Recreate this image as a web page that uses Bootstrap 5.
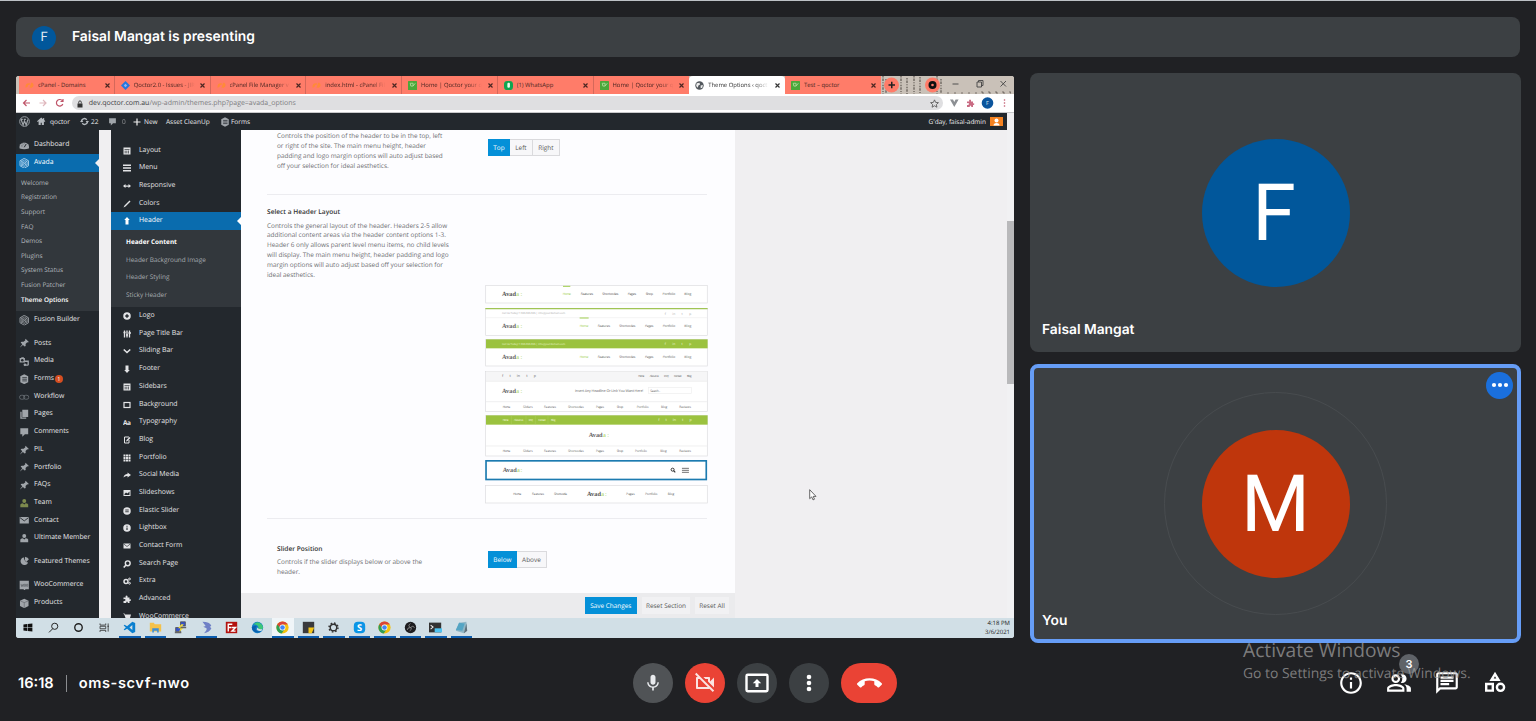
<!DOCTYPE html>
<html lang="en">
<head>
<meta charset="utf-8">
<meta name="viewport" content="width=device-width, initial-scale=1">
<title>Meet - oms-scvf-nwo</title>
<link rel="stylesheet" href="https://cdn.jsdelivr.net/npm/bootstrap@5.3.0/dist/css/bootstrap.min.css">
<style>
html,body{height:721px;overflow:hidden}
body{background:#202124;color:#fff;font-family:Inter,"Open Sans",sans-serif;text-rendering:geometricPrecision;border-top:1px solid #bdc1c6}
svg{display:block;flex:none}
.present-bar{height:40px;margin:16px 16px 0;background:#3c4043;border-radius:8px;padding:1px 0 0 16px;font-size:13.85px;font-weight:600}
.mini-av{width:24px;height:24px;background:#01579b;font:400 13px Roboto,sans-serif;color:#dfe9f2}
.stage{padding:16px 15px 0 16px;height:586px}
/* shared screen */
.share{width:998px;height:562px;margin-top:3px;border-radius:3px;overflow:hidden;background:#f0eff1;color:#444;font-family:"Open Sans","Noto Sans",sans-serif;font-size:6.43px;line-height:10px}
.tabstrip{height:18px;background:#c9c1b8;padding-left:3px}
.tab-i{width:95.75px;background:#ff7c69;color:#4a2622;font-size:5.9px;padding-left:6px;border-right:1px solid #d5685a}
.tab-i:nth-child(7),.tab-i:nth-child(8),.tab-i:nth-child(9){border-right-color:transparent}
.tab-i.on{background:#fff;color:#333;border-radius:4px 4px 0 0}
.tab-i svg{width:9px;height:9px;margin-right:4px}
.tab-i .lbl{width:62px;overflow:hidden;white-space:nowrap}
.tab-i .fade-r{-webkit-mask:linear-gradient(90deg,#000 75%,transparent 98%)}
.tab-i svg.x{width:5px;height:5px;margin:0 0 0 4.5px}
.paper{background:#c9c1b8}
.toolbar{height:19px;background:#fff;border-bottom:1px solid #c9c9cb}
.omni{width:871px;height:14px;border-radius:7px;background:#dfdfe1;margin-left:3.5px;padding:1px 4px 0 4.5px;color:#7c7c7f;font-size:6.97px}
.omni b{font-weight:400;color:#3b3b3e}
.url{padding-left:.8px}
.adminbar{height:17px;width:991px;background:#23282d;color:#eee;display:grid;grid-template-columns:17px 17px 27px 14px 15px 12px 12px 14px 22px 52px 13px 1fr auto 21px;align-items:center;font-size:6.5px}
.adminbar svg{margin:auto}
.wp-main{height:487.5px;overflow:hidden}
.wp-side{width:82.5px;background:#23282d;color:#eee;padding-top:6.5px}
.wp-it{height:17.7px;padding-left:3px;gap:4.5px;white-space:nowrap;color:#e6e7e8;font-weight:500;font-size:6.85px}
.wp-it svg{color:#a0a5aa;width:10.5px;height:10.5px}
.wp-it.on,.rx-it.on{background:#0a6cae;color:#fff;position:relative}
.wp-it.on svg{color:#b8d8ef}
.wp-it.on::after,.rx-it.on::after{content:"";position:absolute;right:0;top:4.5px;border:4.4px solid transparent;border-right-color:#f0eff1;border-left:0}
.rx-it.on::after{border-right-color:#fff}
.sepr{margin-top:5.75px}
.wp-sub{background:#32373c;padding:4px 5px 4.2px;color:#b4b9be}
.wp-sub div{height:14.6px;line-height:14px}
.num{width:8.5px;height:8.5px;background:#d54e21;color:#fff;font-size:5.5px;margin-left:-4px;border-radius:50%}
.gut{width:12px;background:#f0eff1}
.rx{width:130.5px;background:#23282d;color:#e3e4e6;padding-top:11.3px}
.rx-it{height:17.7px;padding:.8px 0 0 12.5px;gap:8px;font-size:6.9px}
.rx-it svg{width:8px;height:8px}
.rx-sub{background:#32373c;color:#a8adb2;padding:3.2px 15.5px 3.2px}
.rx-sub div{height:17.7px;line-height:17.3px;white-space:nowrap}
.pane{width:494px;background:#fdfdff}
.fld{margin:0 28px 0 26px;border-bottom:1px solid #ececf0;white-space:nowrap}
.fld>div{flex:none}
.fld h6{font-size:6.6px;line-height:10px;font-weight:600;margin:0;color:#333}
.desc{color:#6d6d72;line-height:9.95px}
.bgroup{border:1px solid #dadadd;background:#f7f7f9;color:#555;height:17px;line-height:16px;width:max-content}
.bgroup span{padding:0 5.3px;border-left:1px solid #dadadd}
.bgroup .pk{background:#0490d8;color:#fff;border:0;margin:-1px 0 -1px -1px;line-height:17px}
.actbar{height:24.5px;background:#ebebed;padding:1px 6px 0;gap:5px}
.actbar span{height:17px;line-height:18.6px;text-align:center;background:#f1f1f3;color:#555}
.actbar .save{background:#0490d8;color:#fff}
.rail{width:7px;background:#f1f1f3;margin-left:auto;position:relative}
.thumb{height:163px;margin-top:91px;background:#b9b9bb}
.taskbar{height:20.5px;background:#d1dfe6;color:#222}
.tk{width:25.5px;height:20.5px}
.tk:first-child{margin-left:-1px}
.tk svg{width:13px;height:13px}
.tk.run{box-shadow:inset 0 -2px 0 #0b5cad;width:21.5px;margin:0 2px}
.tk.cur{background:#f0f5f8}
/* participant tiles */
.tile{height:279px;background:#3c4043;border-radius:8px;position:relative}
.tile.me{border:4px solid #669df6;margin-top:12px}
.av{width:148px;height:148px;padding-top:3px;font:400 79px Roboto,sans-serif}
.nm{position:absolute;left:12px;bottom:13px;font-size:13.8px;line-height:18px;font-weight:600}
.me .nm{left:8px;bottom:9px}
.ring{width:223px;height:223px;border:1px solid #484c4f}
.more{position:absolute;right:4px;top:3.5px;width:27px;height:27px;background:#1a6fdc}
.pointer{position:absolute;left:792.5px;top:413px}
/* bottom bar */
.dock{height:78px;padding:2px 0 0;position:relative}
.dock .code{width:633px;padding:1.5px 0 0 18px;font-size:14.6px;font-weight:600}
.code .room{letter-spacing:.6px}
.vr-l{width:1px;height:17px;background:#8b8d90;margin:0 12px}
.rb{width:40px;height:40px;background:#3c4043}
.hang{width:56px;border-radius:20px}
.red{background:#ea4335}
.bdg{position:absolute;left:1399px;top:11px;width:20px;height:20px;background:#5f6368;font-size:11px;font-weight:600}
.wmark{position:absolute;left:1243px;top:637px;color:rgba(160,160,160,.72);font-family:"Open Sans","Noto Sans",sans-serif;white-space:nowrap;pointer-events:none}
.wmark .l1{font-size:19.2px;line-height:26px}
.wmark .l2{font-size:13.9px;line-height:21px}
.slab{font-family:"Liberation Serif",serif}
/* settings fields */
.f1{height:65px}.f1 .txt{margin:1.3px 0 0 10px;width:211px}.g1{margin-top:9px}
.f2{height:324px}.txt2{padding-top:12px;width:217.9px}.mt-d{margin-top:3.5px}
.layouts{padding-top:90px}
.f3{height:74px;border:0}.txt3{padding:24.5px 0 0 10px;width:221px}.g3{margin-top:31.5px}
.save{width:52.5px}.rs{width:48px}.ra{width:34px}
.clock{padding:1.7px 4px 0 0;font-size:6px;line-height:9px}
.tiles{width:491px}.av-f{background:#01579b;padding-right:3px}.av-m{background:#bf360c}
.mic{background:#505356}.calls{gap:12px}.tools{gap:22.3px;padding-right:29.5px}
</style>
</head>
<body>
<svg width="0" height="0" class="position-absolute" aria-hidden="true">
<defs>
<symbol id="x" viewBox="0 0 10 10"><path d="M1 1l8 8M9 1l-8 8" stroke="currentColor" stroke-width="2.3"/></symbol>
<symbol id="cp" viewBox="0 0 16 16"><path d="M1 12q-1-8 6-8h2l-1 3H6q-2 1-1 3zM8 12l3-9h2q5 5-1 9z" fill="#ff8a38"/></symbol>
<symbol id="jira" viewBox="0 0 16 16"><path d="M8 0l8 8-8 8-8-8z" fill="#2577dd"/><path d="M8 5l3 3-3 3-3-3z" fill="#8fb4f5"/></symbol>
<symbol id="qo" viewBox="0 0 16 16"><rect width="16" height="16" rx="1" fill="#4ba83a"/><path d="M4 4h5v5H5zM9 9l4-5" stroke="#b9e2a4" stroke-width="1.4" fill="none"/></symbol>
<symbol id="wa" viewBox="0 0 16 16"><rect width="16" height="16" rx="6" fill="#11a550"/><rect x="6" y="3" width="4.5" height="9" rx="2" fill="#eafff0"/></symbol>
<symbol id="globe" viewBox="0 0 16 16"><circle cx="8" cy="8" r="7.5" fill="#53585d"/><path d="M3 4l5-1 1 3-3 2-1 4-3-3zM10 8l4-1-1 5-3 1z" fill="#eee"/></symbol>
<symbol id="wp" viewBox="0 0 16 16"><circle cx="8" cy="8" r="7" fill="none" stroke="#a0a5aa" stroke-width="1.4"/><path d="M3 5l3 8 2-6 2.5 6L13 5M2.5 5h3M7 5h3" fill="none" stroke="#a0a5aa" stroke-width="1.7"/></symbol>
<symbol id="home" viewBox="0 0 16 16"><path d="M8 1L0 8l1.500 1.500L3 8v7h4v-4h2v4h4V8l1.500 1.500L16 8l-2.500-2.200V2h-2v2z" fill="#b4b9be"/></symbol>
<symbol id="upd" viewBox="0 0 16 16"><path d="M3 9a5 5 0 0 1 9-4M13 7a5 5 0 0 1-9 4" fill="none" stroke="#b4b9be" stroke-width="2.2"/><path d="M0 9h6L3 5zM10 7h6l-3 4z" fill="#b4b9be"/></symbol>
<symbol id="cmt" viewBox="0 0 16 16"><path d="M2 2h12v9H9l-4 4v-4H2z" fill="currentColor"/></symbol>
<symbol id="plus" viewBox="0 0 16 16"><path d="M8 1v14M1 8h14" stroke="currentColor" stroke-width="2.4"/></symbol>
<symbol id="forms" viewBox="0 0 16 16"><path d="M8 .5l6 3v9l-6 3-6-3v-9z" fill="currentColor"/><path d="M5 5.500h7M5 8h7M5 10.500h7" stroke="#23282d" stroke-width="1.100"/></symbol>
<symbol id="dash" viewBox="0 0 16 16"><path d="M1 13a7.300 7.300 0 1 1 14 0q-7 2-14 0z" fill="currentColor"/><path d="M8 11l3-5M4 9h1M5 5.500l1 1M8 4v1" stroke="#23282d" stroke-width="1.500"/></symbol>
<symbol id="ava" viewBox="0 0 16 16"><path d="M8 .5l6.500 3.700v7.600L8 15.500l-6.500-3.700V4.200z" fill="none" stroke="currentColor" stroke-width="1.300"/><path d="M8 3l4.500 2.500v5L8 13l-4.500-2.500v-5zM8 5.500l2.500 1.300v2.800L8 11l-2.500-1.400V6.800zM3 4l10 8M13 4L3 12" fill="none" stroke="currentColor"/></symbol>
<symbol id="pin" viewBox="0 0 16 16"><path d="M10 1l5 5-1.500.8-1-.3-2.500 2.700.2 3L8.500 13 6 10.500 1 15l4-5.500L2.500 7 4 5.700l3 .2 2.700-2.400-.3-1z" fill="currentColor"/></symbol>
<symbol id="media" viewBox="0 0 16 16"><path d="M1 3h2l1-1h3l1 1h1v7H1z" fill="currentColor"/><circle cx="5" cy="6.500" r="2" fill="#23282d"/><path d="M8 8h6v6M10 14h4" fill="none" stroke="currentColor" stroke-width="2"/><circle cx="9" cy="13.500" r="2" fill="currentColor"/></symbol>
<symbol id="link" viewBox="0 0 16 16"><rect x=".8" y="5" width="8" height="6" rx="3" fill="none" stroke="#6a7075" stroke-width="1.300"/><rect x="7" y="5" width="8" height="6" rx="3" fill="none" stroke="#6a7075" stroke-width="1.300"/></symbol>
<symbol id="pages" viewBox="0 0 16 16"><path d="M5 1h9v11H5zM2 4h2v9h7v2H2z" fill="currentColor"/></symbol>
<symbol id="usr" viewBox="0 0 16 16"><circle cx="8" cy="4.500" r="3" fill="currentColor"/><path d="M2 14v-4q2-2 4-2l2 2 2-2q3 0 4 2v4z" fill="currentColor"/></symbol>
<symbol id="mail" viewBox="0 0 16 16"><path d="M1 3h14v10H1z" fill="currentColor"/><path d="M1.500 4L8 9l6.500-5" fill="none" stroke="#23282d" stroke-width="1.300"/></symbol>
<symbol id="feat" viewBox="0 0 16 16"><path d="M7 2a6 6 0 1 0 7 8q-5 0-7-8z" fill="currentColor"/><path d="M9 1q5 1 6 4l-4 4q-3-3-2-8z" fill="currentColor"/></symbol>
<symbol id="woo" viewBox="0 0 16 16"><path d="M1 1h14v13h-5l-2 2-1-2H1z" fill="currentColor"/><path d="M3 6l1 4 1-3 1 3 1-4M8 6.500h2v3H8zM11.500 6.500h2v3h-2z" fill="none" stroke="#555a5f" stroke-width=".9"/></symbol>
<symbol id="box" viewBox="0 0 16 16"><path d="M8 1l6.500 3v8L8 15.500 1.500 12V4z" fill="currentColor"/><path d="M2 4.500L8 7l6-2.500M8 7v8" fill="none" stroke="#565b60" stroke-width=".8"/></symbol>
<symbol id="r-lay" viewBox="0 0 16 16"><rect x="1" y="1" width="14" height="14" fill="currentColor"/><path d="M3 5h10M3 8.500h6M3 11.500h6M11 7v6" stroke="#23282d" stroke-width="1.300"/></symbol>
<symbol id="r-menu" viewBox="0 0 16 16"><path d="M0 2.500h16M0 8h16M0 13.500h16" stroke="currentColor" stroke-width="3"/></symbol>
<symbol id="r-resp" viewBox="0 0 16 16"><path d="M0 8l5-4v3h6V4l5 4-5 4V9.500H5V12z" fill="currentColor"/></symbol>
<symbol id="r-col" viewBox="0 0 16 16"><path d="M1 15l2-4L13 1l2 2L5 13z" fill="currentColor"/></symbol>
<symbol id="r-up" viewBox="0 0 16 16"><path d="M8 0l5.500 6H11v9H5V6H2.500z" fill="currentColor"/></symbol>
<symbol id="r-dn" viewBox="0 0 16 16"><path d="M8 16l5.500-6H11V1H5v9H2.500z" fill="currentColor"/></symbol>
<symbol id="r-plus" viewBox="0 0 16 16"><circle cx="8" cy="8" r="7.500" fill="currentColor"/><path d="M8 4.500v7M4.500 8h7" stroke="#23282d" stroke-width="3"/></symbol>
<symbol id="r-sl" viewBox="0 0 16 16"><path d="M3 1v14M8 1v14M13 1v14" stroke="currentColor" stroke-width="2.600"/><path d="M1 5h4M6 10h4M11 6h5" stroke="currentColor" stroke-width="2.600"/></symbol>
<symbol id="r-chev" viewBox="0 0 16 16"><path d="M1.500 5L8 11l6.500-6" fill="none" stroke="currentColor" stroke-width="3.200"/></symbol>
<symbol id="r-bg" viewBox="0 0 16 16"><rect x="2" y="3" width="12" height="10" fill="none" stroke="currentColor" stroke-width="2.400"/></symbol>
<symbol id="r-blog" viewBox="0 0 16 16"><path d="M12 8v6H3V2h9" fill="none" stroke="currentColor" stroke-width="2"/><path d="M6 11l1-3 6-6 2 2-6 6z" fill="currentColor"/></symbol>
<symbol id="r-grid" viewBox="0 0 16 16"><path d="M1 1h4v4H1zM6 1h4v4H6zM11 1h4v4h-4zM1 6h4v4H1zM6 6h4v4H6zM11 6h4v4h-4zM1 11h4v4H1zM6 11h4v4H6zM11 11h4v4h-4z" fill="currentColor"/></symbol>
<symbol id="r-soc" viewBox="0 0 16 16"><path d="M9 3l7 5-7 5v-3q-5-.5-8 3 1-7 8-7z" fill="currentColor"/></symbol>
<symbol id="r-img" viewBox="0 0 16 16"><rect x="1" y="2" width="14" height="12" fill="currentColor"/><path d="M3 12V10l3-3 3 2 4-4v7z" fill="#23282d"/></symbol>
<symbol id="r-el" viewBox="0 0 16 16"><circle cx="8" cy="8" r="7.500" fill="currentColor"/><path d="M4.500 6h7M4.500 9.500h7" stroke="#23282d" stroke-width="1.700"/></symbol>
<symbol id="r-inf" viewBox="0 0 16 16"><circle cx="8" cy="8" r="7.500" fill="currentColor"/><path d="M8 7v5M8 3.500v2" stroke="#23282d" stroke-width="2.200"/></symbol>
<symbol id="r-srch" viewBox="0 0 16 16"><circle cx="9.500" cy="6.500" r="4.800" fill="none" stroke="currentColor" stroke-width="2.900"/><path d="M6 10l-4.500 5" stroke="currentColor" stroke-width="3.200"/></symbol>
<symbol id="r-gear" viewBox="0 0 16 16"><circle cx="6" cy="9" r="4" fill="none" stroke="currentColor" stroke-width="3"/><circle cx="13" cy="4" r="1.800" fill="none" stroke="currentColor" stroke-width="2"/><circle cx="13" cy="12.500" r="1.800" fill="none" stroke="currentColor" stroke-width="2"/></symbol>
<symbol id="puz" viewBox="0 0 16 16"><path d="M1 5h4.500Q4 1 7 1t2 4h4v4q3-1.500 3 1t-3 2v4H9.500q.5-3-1.500-3t-1.500 3H1v-4q4 .500 4-2t-4-1.500z" fill="currentColor"/></symbol>
<symbol id="cart" viewBox="0 0 16 16"><path d="M0 1h3l1 2h12l-2 7H5L2.500 3zM5 12h9v1H5z" fill="currentColor"/></symbol>
<symbol id="chrome" viewBox="0 0 16 16"><circle cx="8" cy="8" r="7.500" fill="#f4c20d"/><path d="M8 8L1.500 4.250A7.500 7.500 0 0 0 7 15.400L11 9.500z" fill="#2f9e55"/><path d="M1.500 4.250A7.500 7.500 0 0 1 14.500 4.250H8L5 8z" fill="#db4437"/><circle cx="8" cy="8" r="3.600" fill="#fff"/><circle cx="8" cy="8" r="2.800" fill="#4285f4"/></symbol>
</defs></svg>

<header class="present-bar d-flex align-items-center">
<span class="mini-av rounded-circle d-flex align-items-center justify-content-center me-3">F</span><span>Faisal Mangat is presenting</span>
</header>

<main class="stage d-flex justify-content-between">
<section class="share d-flex flex-column position-relative">
  <div class="tabstrip d-flex">
    <div class="tab-i d-flex align-items-center"><svg><use href="#cp"/></svg><span class="lbl">cPanel - Domains</span><svg class="x"><use href="#x"/></svg></div>
    <div class="tab-i d-flex align-items-center"><svg><use href="#jira"/></svg><span class="lbl fade-r">Qoctor2.0 - Issues - JIR</span><svg class="x"><use href="#x"/></svg></div>
    <div class="tab-i d-flex align-items-center"><svg><use href="#cp"/></svg><span class="lbl fade-r">cPanel File Manager v</span><svg class="x"><use href="#x"/></svg></div>
    <div class="tab-i d-flex align-items-center"><svg><use href="#cp"/></svg><span class="lbl fade-r">index.html - cPanel Fil</span><svg class="x"><use href="#x"/></svg></div>
    <div class="tab-i d-flex align-items-center"><svg><use href="#qo"/></svg><span class="lbl fade-r">Home | Qoctor your q</span><svg class="x"><use href="#x"/></svg></div>
    <div class="tab-i d-flex align-items-center"><svg><use href="#wa"/></svg><span class="lbl">(1) WhatsApp</span><svg class="x"><use href="#x"/></svg></div>
    <div class="tab-i d-flex align-items-center"><svg><use href="#qo"/></svg><span class="lbl fade-r">Home | Qoctor your q</span><svg class="x"><use href="#x"/></svg></div>
    <div class="tab-i on d-flex align-items-center"><svg><use href="#globe"/></svg><span class="lbl fade-r">Theme Options ‹ qoct</span><svg class="x"><use href="#x"/></svg></div>
    <div class="tab-i d-flex align-items-center"><svg><use href="#qo"/></svg><span class="lbl">Test – qoctor</span><svg class="x"><use href="#x"/></svg></div>
    <svg class="paper" width="133" height="18" viewBox="0 0 133 18"><g fill="none" stroke="#7a726b" stroke-width="1.600" stroke-dasharray="1.500 1 2.500 1.200 1 1.500"><path d="M2 0v18M5 3v15M20 0v18M26 2v16M33 0v18M39 1v17M56 0v18M60 3v15"/><path d="M66 17h64M100 16h30" stroke-width="1.200" stroke-dasharray="2 5"/></g><circle cx="10.500" cy="9" r="7.500" fill="#ff7c69"/><path d="M7.500 9h6.500M10.750 5.750v6.500" stroke="#222" stroke-width="1.500"/><circle cx="51.500" cy="9" r="7.500" fill="#ff7c69"/><circle cx="51.500" cy="9" r="4" fill="#111"/><circle cx="51.500" cy="9" r="1.300" fill="#ff7c69"/><g fill="none" stroke="#444" stroke-width=".9"><path d="M71.500 8h6M119.500 5l5.500 5.500M125 5l-5.500 5.500"/><path d="M96 6h4.500v5H96zM97.500 6V4.500h4.500v5h-1.500"/></g></svg>
  </div>
  <div class="toolbar d-flex align-items-center">
    <svg width="52" height="18" viewBox="0 0 52 18" fill="none" stroke-width="1.200"><path d="M14 9H7.500M10.500 6l-3 3 3 3" stroke="#c0566a"/><path d="M23.500 9H30M27 6l3 3-3 3" stroke="#dfb7bd"/><path d="M46.500 7a3.300 3.300 0 1 0 .3 3M47 5v2.500h-2.500" stroke="#c0566a"/></svg>
    <div class="omni d-flex align-items-center"><svg width="8" height="8" viewBox="0 0 8 8" class="me-1"><rect x="1.500" y="3.500" width="5" height="4" fill="#333"/><path d="M2.700 3.500V2.200a1.300 1.300 0 0 1 2.600 0v1.300" fill="none" stroke="#333" stroke-width=".9"/></svg><span class="url"><b>dev.qoctor.com.au</b>/wp-admin/themes.php?page=avada_options</span>
    <svg class="ms-auto" width="9" height="9" viewBox="0 0 16 16"><path d="M8 1.500l2 4.500 5 .5-3.700 3.300 1 4.800L8 12l-4.300 2.600 1-4.800L1 6.500 6 6z" fill="none" stroke="#555" stroke-width="1.500"/></svg></div>
    <svg width="70" height="18" viewBox="0 0 70 18"><path d="M7 5.500h3l1.300 2.500 1.300-2.500h3L11.300 13z" fill="#8c8f93"/><g transform="translate(23.500 5) scale(.5)" color="#c96b83"><use href="#puz" width="16" height="16"/></g><circle cx="44.500" cy="9" r="5.800" fill="#0b559d"/><text x="44.500" y="11" font-size="5.500" text-anchor="middle" fill="#dfe9f2">F</text><g fill="#c0566a"><circle cx="61.500" cy="6" r=".8"/><circle cx="61.500" cy="9" r=".8"/><circle cx="61.500" cy="12" r=".8"/></g></svg>
  </div>
  <div class="adminbar">
    <svg width="11" height="11"><use href="#wp"/></svg><svg width="8.500" height="8.500"><use href="#home"/></svg><span>qoctor</span><svg width="9" height="9"><use href="#upd"/></svg><span>22</span><svg width="9" height="9" color="#a0a5aa"><use href="#cmt"/></svg><span class="ps-1 opacity-50">0</span><svg width="8" height="8"><use href="#plus"/></svg><span>New</span><span>Asset CleanUp</span><svg width="10" height="10" color="#a0a5aa"><use href="#forms"/></svg><span>Forms</span><span class="gday">G'day, faisal-admin</span>
    <svg width="13" height="9" viewBox="0 0 13 9"><rect width="13" height="9" fill="#f58220"/><circle cx="6.500" cy="3.500" r="2" fill="#fff"/><path d="M3.500 8.500q0-2.500 3-2.500t3 2.500z" fill="#fff"/></svg>
  </div>
  <div class="wp-main d-flex">
    <nav class="wp-side">
      <div class="wp-it d-flex align-items-center"><svg><use href="#dash"/></svg>Dashboard</div>
      <div class="wp-it on d-flex align-items-center"><svg><use href="#ava"/></svg>Avada</div>
      <div class="wp-sub"><div>Welcome</div><div>Registration</div><div>Support</div><div>FAQ</div><div>Demos</div><div>Plugins</div><div>System Status</div><div>Fusion Patcher</div><div class="text-white fw-semibold">Theme Options</div></div>
      <div class="wp-it d-flex align-items-center"><svg><use href="#ava"/></svg>Fusion Builder</div>
      <div class="wp-it sepr d-flex align-items-center"><svg><use href="#pin"/></svg>Posts</div>
      <div class="wp-it d-flex align-items-center"><svg><use href="#media"/></svg>Media</div>
      <div class="wp-it d-flex align-items-center"><svg><use href="#forms"/></svg>Forms<span class="num d-flex align-items-center justify-content-center">1</span></div>
      <div class="wp-it d-flex align-items-center"><svg><use href="#link"/></svg>Workflow</div>
      <div class="wp-it d-flex align-items-center"><svg><use href="#pages"/></svg>Pages</div>
      <div class="wp-it d-flex align-items-center"><svg><use href="#cmt"/></svg>Comments</div>
      <div class="wp-it d-flex align-items-center"><svg><use href="#pin"/></svg>PIL</div>
      <div class="wp-it d-flex align-items-center"><svg><use href="#pin"/></svg>Portfolio</div>
      <div class="wp-it d-flex align-items-center"><svg><use href="#pin"/></svg>FAQs</div>
      <div class="wp-it d-flex align-items-center"><svg><use href="#usr" color="#7d8a4e"/></svg>Team</div>
      <div class="wp-it d-flex align-items-center"><svg><use href="#mail"/></svg>Contact</div>
      <div class="wp-it d-flex align-items-center"><svg><use href="#usr"/></svg>Ultimate Member</div>
      <div class="wp-it sepr d-flex align-items-center"><svg><use href="#feat"/></svg>Featured Themes</div>
      <div class="wp-it sepr d-flex align-items-center"><svg><use href="#woo"/></svg>WooCommerce</div>
      <div class="wp-it d-flex align-items-center"><svg><use href="#box"/></svg>Products</div>
    </nav>
    <div class="gut"></div>
    <nav class="rx">
      <div class="rx-it d-flex align-items-center"><svg><use href="#r-lay"/></svg>Layout</div>
      <div class="rx-it d-flex align-items-center"><svg><use href="#r-menu"/></svg>Menu</div>
      <div class="rx-it d-flex align-items-center"><svg><use href="#r-resp"/></svg>Responsive</div>
      <div class="rx-it d-flex align-items-center"><svg><use href="#r-col"/></svg>Colors</div>
      <div class="rx-it on d-flex align-items-center"><svg><use href="#r-up"/></svg>Header</div>
      <div class="rx-sub"><div class="text-white fw-bold">Header Content</div><div>Header Background Image</div><div>Header Styling</div><div>Sticky Header</div></div>
      <div class="rx-it d-flex align-items-center"><svg><use href="#r-plus"/></svg>Logo</div>
      <div class="rx-it d-flex align-items-center"><svg><use href="#r-sl"/></svg>Page Title Bar</div>
      <div class="rx-it d-flex align-items-center"><svg><use href="#r-chev"/></svg>Sliding Bar</div>
      <div class="rx-it d-flex align-items-center"><svg><use href="#r-dn"/></svg>Footer</div>
      <div class="rx-it d-flex align-items-center"><svg><use href="#r-lay"/></svg>Sidebars</div>
      <div class="rx-it d-flex align-items-center"><svg><use href="#r-bg"/></svg>Background</div>
      <div class="rx-it d-flex align-items-center"><svg viewBox="0 0 8 8"><text x="0" y="6.700" font-size="6.500" font-weight="700" fill="#e3e4e6" textLength="8">Aa</text></svg>Typography</div>
      <div class="rx-it d-flex align-items-center"><svg><use href="#r-blog"/></svg>Blog</div>
      <div class="rx-it d-flex align-items-center"><svg><use href="#r-grid"/></svg>Portfolio</div>
      <div class="rx-it d-flex align-items-center"><svg><use href="#r-soc"/></svg>Social Media</div>
      <div class="rx-it d-flex align-items-center"><svg><use href="#r-img"/></svg>Slideshows</div>
      <div class="rx-it d-flex align-items-center"><svg><use href="#r-el"/></svg>Elastic Slider</div>
      <div class="rx-it d-flex align-items-center"><svg><use href="#r-inf"/></svg>Lightbox</div>
      <div class="rx-it d-flex align-items-center"><svg><use href="#mail"/></svg>Contact Form</div>
      <div class="rx-it d-flex align-items-center"><svg><use href="#r-srch"/></svg>Search Page</div>
      <div class="rx-it d-flex align-items-center"><svg><use href="#r-gear"/></svg>Extra</div>
      <div class="rx-it d-flex align-items-center"><svg><use href="#puz"/></svg>Advanced</div>
      <div class="rx-it d-flex align-items-center"><svg><use href="#cart"/></svg>WooCommerce</div>
    </nav>
    <section class="pane d-flex flex-column">
      <div class="fld f1 d-flex"><div class="desc txt">Controls the position of the header to be in the top, left<br>or right of the site. The main menu height, header<br>padding and logo margin options will auto adjust based<br>off your selection for ideal aesthetics.</div>
        <div class="bgroup d-flex g1"><span class="pk">Top</span><span class="border-0">Left</span><span>Right</span></div></div>
      <div class="fld f2 d-flex"><div class="txt2"><h6>Select a Header Layout</h6><div class="desc mt-d">Controls the general layout of the header. Headers 2-5 allow<br>additional content areas via the header content options 1-3.<br>Header 6 only allows parent level menu items, no child levels<br>will display. The main menu height, header padding and logo<br>margin options will auto adjust based off your selection for<br>ideal aesthetics.</div></div>
        <div class="layouts">
<svg width="223.300" height="22.670" viewBox="30 30 670 68" font-size="10" fill="#555"><rect x="32" y="31" width="665" height="53" fill="#fff" stroke="#dcdcde" stroke-width="2"/><text class="slab" x="81" y="64" font-size="19" font-weight="700" textLength="42">Avad</text><text class="slab" x="124" y="64" font-size="19" fill="#a0ce4e" textLength="18">a:</text><path d="M264 34h22" stroke="#a0ce4e" stroke-width="3"/><text x="263" y="61" fill="#a0ce4e" textLength="25">Home</text><text x="317" y="61" textLength="37">Features</text><text x="382" y="61" textLength="48">Shortcodes</text><text x="458" y="61" textLength="25">Pages</text><text x="512" y="61" textLength="22">Shop</text><text x="563" y="61" textLength="38">Portfolio</text><text x="628" y="61" textLength="21">Blog</text></svg>
<svg width="223.300" height="31.670" viewBox="30 98 670 95" font-size="10" fill="#666"><rect x="32" y="99" width="665" height="82" fill="#fff" stroke="#dcdcde" stroke-width="2"/><path d="M31 100h667" stroke="#a0c455" stroke-width="4"/><path d="M33 127h664" stroke="#eee" stroke-width="2"/><text x="81" y="117" font-size="8" fill="#aaa" textLength="190">Call Us Today! 1.555.555.555 | info@yourdomain.com</text><text x="569" y="118" fill="#aaa" textLength="80" word-spacing="16">f in t p</text><text class="slab" x="81" y="159" font-size="19" font-weight="700" textLength="42">Avad</text><text class="slab" x="124" y="159" font-size="19" fill="#a0ce4e" textLength="18">a:</text><path d="M314 128h27" stroke="#a0ce4e" stroke-width="3"/><text x="314" y="156" fill="#a0ce4e" textLength="26">Home</text><text x="368" y="156" textLength="37">Features</text><text x="433" y="156" textLength="48">Shortcodes</text><text x="510" y="156" textLength="25">Pages</text><text x="563" y="156" textLength="38">Portfolio</text><text x="628" y="156" textLength="21">Blog</text></svg>
<svg width="223.300" height="31.670" viewBox="30 193 670 95" font-size="10" fill="#666"><rect x="32" y="194" width="665" height="80" fill="#fff" stroke="#dcdcde" stroke-width="2"/><rect x="33" y="194" width="665" height="27" fill="#9bc23f"/><text x="81" y="211" font-size="8" fill="#e6f2cc" textLength="190">Call Us Today! 1.555.555.555 | info@yourdomain.com</text><text x="569" y="212" fill="#eef7dc" textLength="80" word-spacing="16">f in t p</text><text class="slab" x="81" y="252" font-size="19" font-weight="700" textLength="42">Avad</text><text class="slab" x="124" y="252" font-size="19" fill="#a0ce4e" textLength="18">a:</text><text x="314" y="249" fill="#a0ce4e" textLength="26">Home</text><text x="368" y="249" textLength="37">Features</text><text x="433" y="249" textLength="48">Shortcodes</text><text x="510" y="249" textLength="25">Pages</text><text x="563" y="249" textLength="38">Portfolio</text><text x="628" y="249" textLength="21">Blog</text></svg>
<svg width="223.300" height="44.330" viewBox="30 288 670 133" font-size="9.500" fill="#666"><rect x="32" y="289" width="665" height="120" fill="#fff" stroke="#dcdcde" stroke-width="2"/><rect x="33" y="290" width="663" height="28" fill="#f6f6f7"/><path d="M33 319h663M33 380h663" stroke="#e8e8ea" stroke-width="2"/><text x="81" y="306" font-size="11" textLength="102" word-spacing="15">f t in t p</text><g font-size="8.500"><text x="490" y="305" textLength="18">Home</text><text x="524" y="305" textLength="28">About Us</text><text x="567" y="305" textLength="14">FAQ</text><text x="597" y="305" textLength="23">Contact</text><text x="636" y="305" textLength="14">Blog</text></g><text class="slab" x="81" y="354" font-size="19" font-weight="700" textLength="42">Avad</text><text class="slab" x="124" y="354" font-size="19" fill="#a0ce4e" textLength="18">a:</text><text x="300" y="351" font-size="11" textLength="205">Insert Any Headline Or Link You Want Here!</text><rect x="520" y="338" width="129" height="18" fill="none" stroke="#eee" stroke-width="2"/><text x="526" y="351" textLength="30">Search...</text><text x="83" y="398" textLength="23">Home</text><text x="144" y="398" textLength="29">Sliders</text><text x="207" y="398" textLength="36">Features</text><text x="279" y="398" textLength="47">Shortcodes</text><text x="363" y="398" textLength="24">Pages</text><text x="425" y="398" textLength="20">Shop</text><text x="485" y="398" textLength="36">Portfolio</text><text x="558" y="398" textLength="19">Blog</text><text x="613" y="398" textLength="35">Reviews</text></svg>
<svg width="223.300" height="44.670" viewBox="30 421 670 134" font-size="9.500" fill="#666"><rect x="32" y="422" width="665" height="122" fill="#fff" stroke="#dcdcde" stroke-width="2"/><rect x="33" y="422" width="665" height="28" fill="#9bc23f"/><path d="M33 514h663" stroke="#e8e8ea" stroke-width="2"/><path d="M109 424v25M153 424v25M181 424v25M219 424v25" stroke="#b5d46b"/><g font-size="8.500" fill="#eef7dc"><text x="83" y="440" textLength="18">Home</text><text x="117" y="440" textLength="28">About Us</text><text x="161" y="440" textLength="13">FAQ</text><text x="190" y="440" textLength="22">Contact</text><text x="228" y="440" textLength="14">Blog</text><text x="550" y="440" font-size="11" textLength="100" word-spacing="15">f t in t p</text></g><text class="slab" x="341" y="487" font-size="19" font-weight="700" textLength="42">Avad</text><text class="slab" x="384" y="487" font-size="19" fill="#a0ce4e" textLength="18">a:</text><text x="83" y="533" textLength="23">Home</text><text x="144" y="533" textLength="29">Sliders</text><text x="207" y="533" textLength="36">Features</text><text x="279" y="533" textLength="47">Shortcodes</text><text x="363" y="533" textLength="24">Pages</text><text x="425" y="533" textLength="20">Shop</text><text x="480" y="533" textLength="36">Portfolio</text><text x="556" y="533" textLength="19">Blog</text><text x="613" y="533" textLength="35">Reviews</text></svg>
<svg width="223.300" height="24.670" viewBox="30 555 670 74" fill="#666"><rect x="33" y="557.500" width="661" height="56" fill="#fff" stroke="#1c7bb0" stroke-width="5"/><text class="slab" x="83" y="592" font-size="19" font-weight="700" textLength="42">Avad</text><text class="slab" x="126" y="592" font-size="19" fill="#a0ce4e" textLength="16">a:</text><circle cx="593" cy="584" r="4.500" fill="none" stroke="#333" stroke-width="3"/><path d="M596 587l5 5" stroke="#333" stroke-width="3.500"/><path d="M621 580h21M621 586h21M621 592h21" stroke="#555" stroke-width="2.500"/></svg>
<svg width="223.300" height="19" viewBox="30 629 670 57" font-size="9.500" fill="#555"><rect x="32" y="630" width="665" height="53" fill="#fff" stroke="#dcdcde" stroke-width="2"/><text x="115" y="660" textLength="24">Home</text><text x="171" y="660" textLength="36">Features</text><text x="237" y="660" textLength="39">Shortcode</text><text class="slab" x="336" y="661" font-size="19" font-weight="700" textLength="42">Avad</text><text class="slab" x="379" y="661" font-size="19" fill="#a0ce4e" textLength="16">a:</text><text x="454" y="660" textLength="25">Pages</text><text x="511" y="660" textLength="36">Portfolio</text><text x="578" y="660" textLength="20">Blog</text></svg>
        </div></div>
      <div class="fld f3 d-flex"><div class="txt3"><h6>Slider Position</h6><div class="desc mt-d">Controls if the slider displays below or above the<br>header.</div></div>
        <div class="bgroup d-flex g3"><span class="pk">Below</span><span class="border-0">Above</span></div></div>
      <div class="actbar mt-auto d-flex align-items-center justify-content-end"><span class="save">Save Changes</span><span class="rs">Reset Section</span><span class="ra">Reset All</span></div>
    </section>
    <div class="rail"><div class="thumb"></div></div>
  </div>
  <svg class="pointer" width="8" height="12" viewBox="0 0 8 12"><path d="M.7.700v9l2-1.800 1.300 3 1.500-.7-1.300-2.800h2.800z" fill="#fff" stroke="#444" stroke-width=".8"/></svg>
  <div class="taskbar d-flex">
    <div class="tk d-flex align-items-center justify-content-center"><svg viewBox="0 0 16 16"><path d="M3 4.300l4.500-.6v4H3zM8.200 3.600L14 3v4.700H8.200zM3 8.400h4.500v4L3 11.800zM8.200 8.400H14V13l-5.800-.6z" fill="#111"/></svg></div>
    <div class="tk d-flex align-items-center justify-content-center"><svg viewBox="0 0 16 16" fill="none" stroke="#222" stroke-width="1.200"><circle cx="9.500" cy="6.500" r="3.800"/><path d="M7 9.500L2.500 14"/></svg></div>
    <div class="tk d-flex align-items-center justify-content-center"><svg viewBox="0 0 16 16"><circle cx="8" cy="8" r="4.600" fill="none" stroke="#222" stroke-width="1.700"/></svg></div>
    <div class="tk d-flex align-items-center justify-content-center"><svg viewBox="0 0 16 16" fill="none" stroke="#333"><path d="M2.500 3v2h7V3M2.500 13.500v-2h7v2M2.500 6.500h7v3h-7zM12.500 3v10M11.500 6.500h2"/></svg></div>
    <div class="tk run d-flex align-items-center justify-content-center"><svg viewBox="0 0 16 16"><path d="M11.500 1L15 2.500v11L11.500 15 5 9.500l-3 2L.8 10.500 3.500 8 .8 5.500 2 4.500l3 2zM11.500 5L8 8l3.500 3z" fill="#0a7fcf"/></svg></div>
    <div class="tk run d-flex align-items-center justify-content-center"><svg viewBox="0 0 16 16"><path d="M1 2h5l1 2h8v9H1z" fill="#f4c14a"/><path d="M4 14V9h8v5h-2v-2H6v2z" fill="#3f8fd6"/></svg></div>
    <div class="tk d-flex align-items-center justify-content-center"><svg viewBox="0 0 16 16"><path d="M8 1h6v5H8zM2 8h6v5H2z" fill="#3653c9" stroke="#555"/><path d="M9 4l-4 5h3l-2 5 6-6H9l3-4z" fill="#f2dc3a"/><path d="M8 7h7v2H8zM1 13h8v2H1z" fill="#666"/></svg></div>
    <div class="tk run d-flex align-items-center justify-content-center"><svg viewBox="0 0 16 16"><path d="M3 1q9 0 11 5l-2 1 2 2q-2 5-9 6 4-4 3-6L4 7l3-1z" fill="#6f80c6"/></svg></div>
    <div class="tk d-flex align-items-center justify-content-center"><svg viewBox="0 0 16 16"><rect x="1" y="1" width="14" height="14" fill="#b3120f"/><path d="M4 13V4h5M4 8h4M8.500 8H13l-4.500 4.500H13" fill="none" stroke="#fff" stroke-width="1.700"/></svg></div>
    <div class="tk d-flex align-items-center justify-content-center"><svg viewBox="0 0 16 16"><circle cx="8" cy="8" r="7" fill="#1280c8"/><path d="M3 4q5-5 10 0 3 4 1 6-3 2-5 0 1-3-2-5-2-1-4-1z" fill="#3dc67a"/><path d="M1 8q2-3 6-2-3 4 0 6 3 2 6 0-4 4-9 1-3-2-3-5z" fill="#0b5fae"/><path d="M8 8q1 3 6 2l-1 2q-5 1-6-2z" fill="#d1dfe6"/></svg></div>
    <div class="tk run cur d-flex align-items-center justify-content-center"><svg><use href="#chrome"/></svg></div>
    <div class="tk run d-flex align-items-center justify-content-center"><svg viewBox="0 0 16 16"><rect x="1" y="1" width="14" height="14" fill="#3a3a3c"/><path d="M8 15V8h7l-3 7z" fill="#f5c518"/></svg></div>
    <div class="tk run d-flex align-items-center justify-content-center"><svg viewBox="0 0 16 16"><circle cx="8" cy="8" r="4" fill="none" stroke="#333" stroke-width="1.700"/><circle cx="8" cy="8" r="5.500" fill="none" stroke="#333" stroke-width="1.800" stroke-dasharray="2 2.320"/></svg></div>
    <div class="tk run d-flex align-items-center justify-content-center"><svg viewBox="0 0 16 16"><rect x="1" y="1" width="14" height="14" rx="5" fill="#0a95e6"/><text x="8" y="12" font-size="11.500" font-weight="700" fill="#fff" text-anchor="middle">S</text></svg></div>
    <div class="tk run d-flex align-items-center justify-content-center"><svg><use href="#chrome"/></svg></div>
    <div class="tk run d-flex align-items-center justify-content-center"><svg viewBox="0 0 16 16"><circle cx="8" cy="8" r="7" fill="#1d1d20"/><path d="M8 3q-4 3 0 5 3 2-1 4M8 8q3-3 5 0M8 8q-4 0-4 3" fill="none" stroke="#999"/></svg></div>
    <div class="tk run d-flex align-items-center justify-content-center"><svg viewBox="0 0 16 16"><rect x="0" y="2" width="15" height="12" fill="#333"/><path d="M2 5l3 2.500L2 10" fill="none" stroke="#eee" stroke-width="1.300"/><rect x="7" y="9" width="9" height="5" fill="#4fc3f0"/></svg></div>
    <div class="tk run d-flex align-items-center justify-content-center"><svg viewBox="0 0 16 16"><path d="M5 2l9-1 1 11-4 3-10-3z" fill="#8fb6c6"/><path d="M5 2l7 1-3 9-8-1z" fill="#54a5c4"/><path d="M11 15l4-3-1-9z" fill="#60707a"/></svg></div>
    <div class="clock ms-auto text-end">4:18 PM<br>3/6/2021</div>
  </div>
</section>

<aside class="tiles">
  <div class="tile d-flex align-items-center justify-content-center"><span class="av rounded-circle d-flex align-items-center justify-content-center av-f">F</span><span class="nm">Faisal Mangat</span></div>
  <div class="tile me d-flex align-items-center justify-content-center"><span class="ring rounded-circle d-flex align-items-center justify-content-center"><span class="av av-m rounded-circle d-flex align-items-center justify-content-center">M</span></span><span class="nm">You</span>
    <span class="more rounded-circle d-flex align-items-center justify-content-center"><svg width="18" height="6" viewBox="0 0 18 6" fill="#fff"><circle cx="3" cy="3" r="2.100"/><circle cx="9" cy="3" r="2.100"/><circle cx="15" cy="3" r="2.100"/></svg></span></div>
</aside>
</main>

<footer class="dock d-flex align-items-center">
  <div class="code d-flex align-items-center"><span>16:18</span><span class="vr-l"></span><span class="room">oms-scvf-nwo</span></div>
  <div class="d-flex calls">
    <span class="rb mic rounded-circle d-flex align-items-center justify-content-center"><svg width="20" height="20" viewBox="0 0 24 24" fill="#e8eaed"><path d="M12 14c1.660 0 2.990-1.340 2.990-3L15 5c0-1.660-1.340-3-3-3S9 3.340 9 5v6c0 1.660 1.340 3 3 3zm5.300-3c0 3-2.540 5.100-5.300 5.100S6.700 14 6.700 11H5c0 3.410 2.720 6.230 6 6.720V21h2v-3.280c3.280-.48 6-3.300 6-6.720h-1.700z"/></svg></span>
    <span class="rb red rounded-circle d-flex align-items-center justify-content-center"><svg width="24" height="24" viewBox="0 0 24 24" fill="#fbe3e1"><path d="M9.560 8l-2-2-4.150-4.140L2 3.270 4.730 6H4c-.55 0-1 .45-1 1v10c0 .55.45 1 1 1h12c.21 0 .39-.08.55-.18L19.730 21l1.410-1.410-8.860-8.860L9.560 8zM5 16V8h1.730l8 8H5zm10-8v2.610l6 6V6.500l-4 4V7c0-.55-.45-1-1-1h-5.610l2 2H15z"/></svg></span>
    <span class="rb rounded-circle d-flex align-items-center justify-content-center"><svg width="24" height="24" viewBox="0 0 24 24"><rect x="1.500" y="3.800" width="21" height="16.500" rx="1.200" fill="none" stroke="#fff" stroke-width="2.400"/><path d="M12 8l-4.200 4.200h2.700V16h3v-3.800h2.700z" fill="#fff"/></svg></span>
    <span class="rb rounded-circle d-flex align-items-center justify-content-center"><svg width="24" height="24" viewBox="0 0 24 24" fill="#fff"><circle cx="12" cy="6" r="2.300"/><circle cx="12" cy="12" r="2.300"/><circle cx="12" cy="18" r="2.300"/></svg></span>
    <span class="rb red hang d-flex align-items-center justify-content-center"><svg width="25" height="25" viewBox="0 0 24 24" fill="#fff"><path d="M12 9c-1.600 0-3.150.25-4.600.72v3.100c0 .39-.23.74-.56.9-.98.490-1.870 1.120-2.660 1.850-.18.18-.43.28-.7.280-.28 0-.53-.11-.71-.29L.29 13.080c-.18-.17-.29-.42-.29-.7 0-.28.11-.53.29-.71C3.340 8.780 7.460 7 12 7s8.660 1.780 11.710 4.670c.18.18.29.43.29.71 0 .28-.11.53-.29.71l-2.480 2.480c-.18.18-.43.29-.71.29-.27 0-.52-.11-.7-.28-.79-.74-1.690-1.360-2.670-1.850-.33-.16-.56-.5-.56-.9v-3.100C15.150 9.250 13.600 9 12 9z"/></svg></span>
  </div>
  <div class="d-flex ms-auto tools">
    <svg width="26" height="26" viewBox="0 0 24 24" fill="#fff"><path d="M11 7h2v2h-2zm0 4h2v6h-2zm1-9C6.480 2 2 6.480 2 12s4.480 10 10 10 10-4.480 10-10S17.520 2 12 2zm0 18c-4.410 0-8-3.590-8-8s3.590-8 8-8 8 3.590 8 8-3.590 8-8 8z"/></svg>
    <svg width="26" height="26" viewBox="0 0 24 24" fill="#fff"><path d="M16.670 13.130C18.040 14.060 19 15.320 19 17v3h4v-3c0-2.180-3.570-3.470-6.330-3.870zM15 12c2.210 0 4-1.790 4-4s-1.790-4-4-4c-.47 0-.91.1-1.330.24C14.500 5.270 15 6.580 15 8s-.5 2.730-1.330 3.760c.42.14.86.24 1.330.24zM9 12c2.210 0 4-1.790 4-4s-1.790-4-4-4-4 1.790-4 4 1.790 4 4 4zm0-6c1.100 0 2 .9 2 2s-.9 2-2 2-2-.9-2-2 .9-2 2-2zM9 13c-2.670 0-8 1.340-8 4v3h16v-3c0-2.660-5.330-4-8-4zm6 5H3v-.99C3.200 16.290 6.300 15 9 15s5.800 1.290 6 2v1z"/></svg>
    <svg width="26" height="26" viewBox="0 0 24 24" fill="#fff"><path d="M4 4h16v12H5.170L4 17.170V4m0-2c-1.100 0-1.990.9-1.990 2L2 22l4-4h14c1.100 0 2-.9 2-2V4c0-1.100-.9-2-2-2H4zm2 10h8v2H6v-2zm0-3h12v2H6V9zm0-3h12v2H6V6z"/></svg>
    <svg width="24" height="24" viewBox="0 0 24 24" fill="none" stroke="#fff" stroke-width="2.400"><path d="M12 4L8.500 9.800h7zM3.200 14h6.600v6.600H3.200z"/><circle cx="17.500" cy="17.300" r="3.600"/></svg>
  </div>
  <span class="bdg rounded-circle d-flex align-items-center justify-content-center">3</span>
</footer>
<div class="wmark"><div class="l1">Activate Windows</div><div class="l2">Go to Settings to activate Windows.</div></div>
<script src="https://cdn.jsdelivr.net/npm/bootstrap@5.3.0/dist/js/bootstrap.bundle.min.js"></script>
</body>
</html>
